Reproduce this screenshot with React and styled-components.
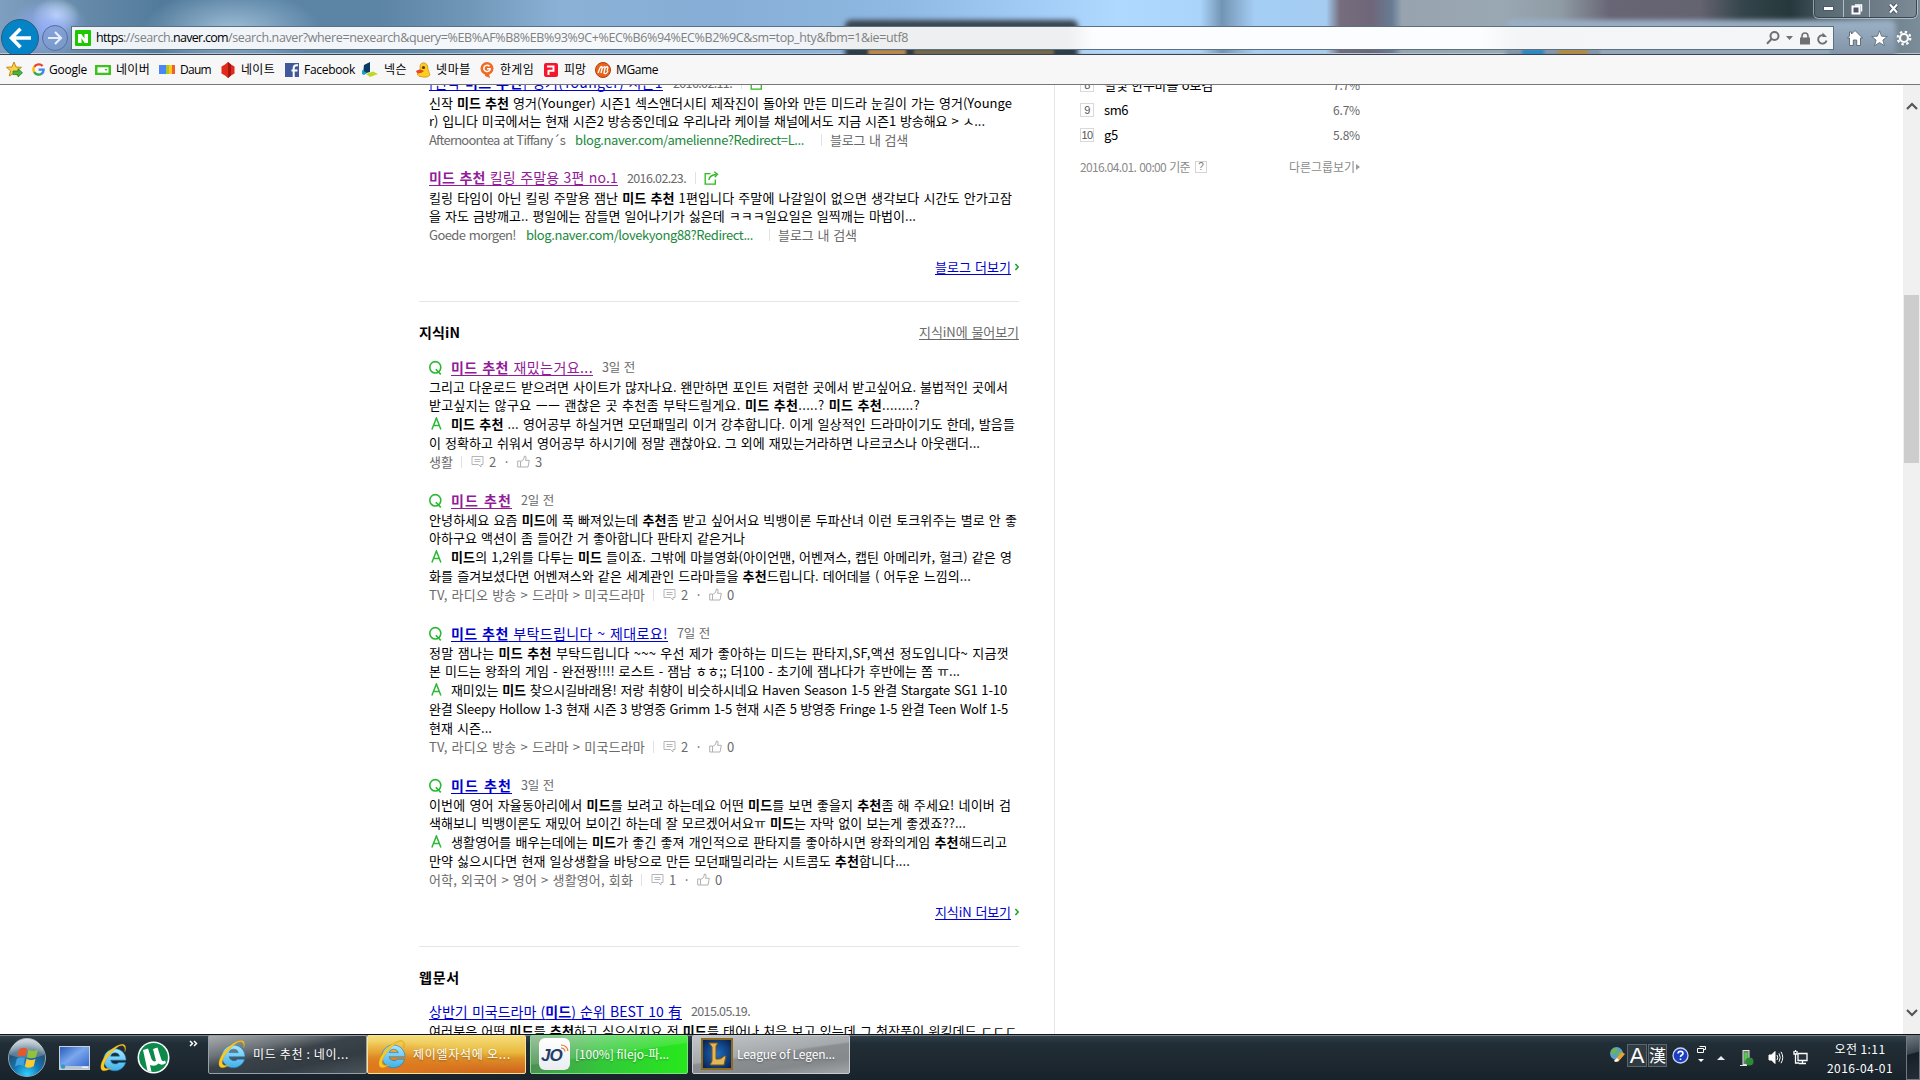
import React, { useLayoutEffect, useRef, useState } from "react";
import styled, { createGlobalStyle, css } from "styled-components";

const Global = createGlobalStyle`
  * { box-sizing: border-box; }
  body { margin: 0; background: #fff; overflow: hidden; }
  svg { display: block; flex: none; }
`;

const SANS = `"Noto Sans CJK KR", "Noto Sans", sans-serif`;

/* ---------- text fitted to a fixed measure ---------- */

const FitBox = styled.span`
  display: inline-block;
  flex: none;
  width: ${(p) => p.$w}px;
  margin-left: ${(p) => p.$ml || 0}px;
  white-space: pre;
  overflow: visible;
`;

const FitText = styled.span`
  a & {
    text-decoration: underline;
    text-decoration-thickness: 1px;
    text-underline-offset: 2px;
    text-decoration-skip-ink: none;
  }
`;

function Fit({ w, ml, children }) {
  const ref = useRef(null);
  const [spacing, setSpacing] = useState(0);
  useLayoutEffect(() => {
    const el = ref.current;
    const natural = el.getBoundingClientRect().width;
    setSpacing((w - natural) / Math.max(1, el.textContent.length));
  }, [w]);
  return (
    <FitBox $w={w} $ml={ml}>
      <FitText ref={ref} style={{ letterSpacing: `${spacing}px` }}>{children}</FitText>
    </FitBox>
  );
}

function rich(text) {
  return text.split("**").map((part, i) => (i % 2 ? <b key={i}>{part}</b> : part));
}

/* ---------- browser frame ---------- */

const Screen = styled.div`
  width: 1920px;
  height: 1080px;
  display: flex;
  flex-direction: column;
  overflow: hidden;
  font-family: ${SANS};
`;

const Glass = styled.header`
  position: relative;
  height: 55px;
  flex: none;
  overflow: hidden;
  border-bottom: 1px solid #39434f;
  box-shadow: inset 0 -1px 0 #b8c6d4;
  background:
    radial-gradient(ellipse 40px 30px at 48px 28px, rgba(150, 175, 255, 0.9), transparent),
    radial-gradient(ellipse 24px 18px at 56px 16px, rgba(225, 245, 255, 0.9), transparent),
    radial-gradient(ellipse 90px 40px at 232px 30px, rgba(175, 205, 228, 0.8), transparent),
    linear-gradient(90deg, #7f9fc0 0, #6c8fae 60px, #527b9b 160px, #5a83a5 270px, #5c84a4 380px,
      #7197b8 470px, #8bb1d6 560px, #86aed6 720px, #8fb8e2 900px, #a3cdf6 1040px, #b0d9ff 1120px,
      #abd4fb 1200px, #7395b4 1222px, #a5cef5 1255px, #a5cdf2 1326px, #756d7d 1340px, #70667a 1372px,
      #687c94 1392px, #97a4b0 1402px, #9aa8b4 1500px, #8f9ca5 1560px, #686575 1610px, #646370 1700px,
      #35454b 1742px, #26383c 1790px, #4a5c64 1830px, #6d7f8a 1880px, #7b8d98 1920px);
`;

const Ghost = styled.div`
  position: absolute;
  left: ${(p) => p.$x}px;
  top: 20px;
  width: ${(p) => p.$w}px;
  height: 46px;
  border-radius: 6px;
  background: ${(p) => p.$bg};
  filter: blur(2.5px);
`;

const Smudge = styled.div`
  position: absolute;
  left: ${(p) => p.$x}px;
  top: 49px;
  width: ${(p) => p.$w}px;
  height: 7px;
  background: ${(p) => p.$c};
  filter: blur(1.6px);
`;

const NavRow = styled.div`
  position: relative;
  height: 54px;
  display: flex;
  align-items: flex-start;
`;

const BackForward = styled.div`
  display: flex;
  width: 71px;
  height: 54px;
  padding-left: 1px;
  overflow: hidden;
  align-items: flex-start;
`;

const BackButton = styled.div`
  width: 38px;
  height: 38px;
  margin-top: 19px;
  border-radius: 50%;
  background: #0483c6;
  border: 1px solid #2a5d80;
  flex: none;
  display: flex;
  align-items: center;
  justify-content: center;
`;

const ForwardButton = styled.div`
  width: 26px;
  height: 26px;
  margin: 25px 0 0 3px;
  border-radius: 50%;
  background: rgba(125, 155, 205, 0.65);
  border: 1px solid #55709a;
  flex: none;
  display: flex;
  align-items: center;
  justify-content: center;
`;

const AddressBar = styled.div`
  display: flex;
  align-items: center;
  width: 1763px;
  height: 24px;
  margin-top: 26px;
  padding: 0 5px 0 3px;
  border: 1px solid #5c7080;
  background: linear-gradient(90deg, #eef3f8, #f6f9fc 30%, #f0f4f8 42%, #eeeff0 44%, #eeeff0 56.5%, #fbfdff 58%, #fbfdff 80%, #f4f5f7 82%, #f5f6f8);
  font: 12.5px/22px "Open Sans", ${SANS};
  color: #808080;
`;

const Dark = styled.span`
  color: #000;
`;

const NaverMark = styled.span`
  width: 16px;
  height: 16px;
  margin-right: 5px;
  border-radius: 1px;
  background: #1ec800;
  display: flex;
  align-items: center;
  justify-content: center;
  flex: none;
`;

const BarIcons = styled.div`
  display: flex;
  align-items: center;
  margin-left: auto;
  gap: ${(p) => p.$gap}px;
`;

const ToolIcons = styled.div`
  display: flex;
  align-items: center;
  gap: 8px;
  margin: 29px 0 0 13px;
`;

const WindowButtons = styled.div`
  position: absolute;
  right: 3px;
  top: 0;
  display: flex;
  width: 103px;
  height: 18px;
  border: 1px solid #3a4650;
  border-top: 0;
  border-radius: 0 0 5px 5px;
  box-shadow: 0 0 0 1px rgba(220, 230, 238, 0.55);
  background: linear-gradient(90deg, #56666e, #7b8a95);
`;

const WindowButton = styled.span`
  width: ${(p) => p.$w}px;
  display: flex;
  align-items: center;
  justify-content: center;
  border-left: ${(p) => (p.$line ? "1px solid #b3bdc5" : "0")};
`;

const Favorites = styled.nav`
  display: flex;
  align-items: center;
  flex: none;
  height: 30px;
  padding-left: 6px;
  background: #f7f7f7;
  border-bottom: 1px solid #777;
  font: 12px/28px "Open Sans", ${SANS};
  color: #000;
`;

const Favorite = styled.span`
  display: flex;
  align-items: center;
  gap: ${(p) => p.$gap}px;
  margin-left: ${(p) => p.$ml}px;
`;

const FavIcon = styled.span`
  width: ${(p) => p.$w}px;
  display: flex;
  justify-content: center;
`;

/* ---------- page ---------- */

const Page = styled.div`
  display: flex;
  flex: none;
  height: 949px;
  overflow: hidden;
  background: #fff;
  color: #000;
  font-size: 13px;
  word-spacing: 1px;
`;

const Results = styled.main`
  width: 600px;
  margin: -14px 0 0 419px;
  flex: none;
`;

const Result = styled.article`
  padding-left: 10px;
  margin-bottom: ${(p) => p.$mb}px;
`;

const row = css`
  display: flex;
  align-items: center;
  white-space: pre;
`;

const TitleRow = styled.div`
  ${row}
  height: ${(p) => p.$h || 22}px;
  line-height: ${(p) => p.$h || 22}px;
`;

const Title = styled.a`
  font-size: 14px;
  color: ${(p) => (p.$visited ? "#921b99" : "#0000cc")};
`;

const Muted = styled.span`
  font-size: 12.5px;
  color: #6a6a6a;
`;

const Url = styled.span`
  color: #20893c;
`;

const Line = styled.div`
  ${row}
  height: ${(p) => p.$h || 18}px;
  line-height: ${(p) => p.$h || 18}px;
`;

const Meta = styled(Line)`
  height: 19px;
  line-height: 19px;
  color: #6a6a6a;
`;

const Sep = styled.i`
  width: 1px;
  height: 12px;
  background: #e2e2e2;
  margin: 0 ${(p) => p.$r}px 0 ${(p) => p.$l}px;
  flex: none;
`;

const Badge = styled.span`
  width: ${(p) => p.$w}px;
  display: flex;
  flex: none;
`;

const MoreRow = styled.div`
  ${row}
  justify-content: flex-end;
  height: 20px;
  line-height: 20px;
  gap: 4px;
  margin-top: ${(p) => p.$mt}px;
`;

const MoreLink = styled.a`
  color: #0000cc;
`;

const Rule = styled.hr`
  height: 1px;
  border: 0;
  margin: 24px 0 20px;
  background: #e5e5e5;
`;

const Heading = styled.div`
  ${row}
  justify-content: space-between;
  height: 20px;
  line-height: 20px;
  margin-bottom: ${(p) => p.$mb}px;
  font-size: 14px;
`;

const AskLink = styled.a`
  font-size: 13px;
  color: #6a6a6a;
`;

const Side = styled.aside`
  width: 306px;
  margin-left: 35px;
  padding-left: 25px;
  border-left: 1px solid #e5e5e5;
  flex: none;
`;

const Ranks = styled.div`
  display: flex;
  flex-direction: column;
  margin-top: -13px;
`;

const Rank = styled.div`
  ${row}
  height: 25px;
  line-height: 25px;
`;

const RankNo = styled.span`
  width: 14px;
  height: 14px;
  margin-right: 10px;
  border: 1px solid #d9d9d9;
  color: #555;
  font: 11px/12px "Liberation Sans", sans-serif;
  letter-spacing: -0.7px;
  text-align: center;
`;

const Percent = styled.span`
  margin-left: auto;
  font-size: 12px;
  color: #666;
`;

const SideFoot = styled.div`
  ${row}
  height: 20px;
  margin-top: 10px;
  line-height: 20px;
  font-size: 12px;
  color: #8b8b8b;
`;

const Help = styled.span`
  width: 12px;
  height: 12px;
  margin: 0 auto 0 5px;
  border: 1px solid #d5d5d5;
  font: 10px/10px "Liberation Sans", sans-serif;
  text-align: center;
  color: #777;
`;

const Scrollbar = styled.div`
  display: flex;
  flex-direction: column;
  align-items: center;
  width: 17px;
  margin-left: auto;
  padding: 17px 0 17px;
  background: #f0f0f0;
`;

const Thumb = styled.div`
  width: 15px;
  height: 168px;
  margin: 184px 0 auto;
  background: #cdcdcd;
`;

/* ---------- taskbar ---------- */

const Taskbar = styled.footer`
  display: flex;
  flex: none;
  height: 46px;
  border-top: 1px solid #0d1318;
  box-shadow: inset 0 1px 0 #78858f;
  background: linear-gradient(180deg, #34424d, #222e37 18%, #1d2830 60%, #18222b);
  color: #fff;
  font: 12px/16px ${SANS};
`;

const Launchers = styled.div`
  display: flex;
  align-items: center;
  width: 208px;
  padding-left: 7px;
`;

const Slot = styled.span`
  margin: ${(p) => p.$m};
  display: flex;
`;

const Chevrons = styled.span`
  margin: 3px 0 0 19px;
  align-self: flex-start;
  display: flex;
`;

const Task = styled.div`
  display: flex;
  align-items: center;
  width: ${(p) => p.$w}px;
  height: 39px;
  margin: 0 ${(p) => p.$mr || 0}px 0 0;
  padding: 0 0 2px ${(p) => p.$pl}px;
  gap: ${(p) => p.$gap}px;
  border: 1px solid ${(p) => p.$edge};
  border-radius: 2px;
  background: ${(p) => p.$bg};
  text-shadow: 0 1px 2px rgba(0, 0, 0, 0.35);
  color: #fff;
`;

const JoIcon = styled.span`
  position: relative;
  width: 31px;
  height: 32px;
  border-radius: 6px;
  background: linear-gradient(#fff, #e9edf0);
  color: #24406a;
  font: italic bold 17px/36px "Liberation Sans", sans-serif;
  letter-spacing: -1px;
  padding-left: 2px;
  text-shadow: none;
`;

const JoWaves = styled.span`
  position: absolute;
  right: 1px;
  top: 6px;
`;

const LolIcon = styled.span`
  width: 32px;
  height: 32px;
  border: 2px solid #8f6a1f;
  background: radial-gradient(circle, #1d6fc4, #071f4e);
  display: flex;
  align-items: center;
  justify-content: center;
`;

const Tray = styled.div`
  display: flex;
  align-items: flex-start;
  margin-left: auto;
`;

const Ime = styled.span`
  width: ${(p) => p.$w}px;
  height: 23px;
  margin: 9px 1px 0 0;
  border: 1px solid #5b656c;
  background: #313b42;
  font: ${(p) => p.$font};
  text-align: center;
  overflow: hidden;
`;

const Clock = styled.div`
  width: 68px;
  margin: 4px 12px 0 0;
  text-align: center;
  line-height: 19px;
  font-size: 12px;
`;

const ShowDesktop = styled.div`
  width: 14px;
  height: 45px;
  border: 1px solid #6d7880;
  background: linear-gradient(165deg, #707a82 0, #39434b 40%, #171f26 42%, #242d35);
`;

/* ---------- drawings ---------- */

const IeLogo = ({ s = 29 }) => (
  <svg width={s} height={s + 2} viewBox="0 0 30 32">
    <defs>
      <linearGradient id="ieb" x1="0" y1="0" x2="0" y2="1">
        <stop offset="0" stopColor="#a8e8ff" />
        <stop offset="1" stopColor="#3fb0ea" />
      </linearGradient>
    </defs>
    <path d="M27.600 21.200A11.600 11.400 0 1 1 27.900 17.300V18.800H12A5 4.700 0 0 0 20.600 21.200ZM12 14.600H21.300A4.800 4.600 0 0 0 12 14.600Z" fill="url(#ieb)" fillRule="evenodd" stroke="#1779b8" strokeWidth="0.6" />
    <path d="M26.800 10C29.500 2 24.500 .2 16.500 5.200C8 10.500 1 20.500 2 27C3 31.500 8.500 29.500 13 26.800C8 28.300 4.600 27.500 5.200 23.500C6.500 17 15 7.500 21 4.200C25.500 2.400 27.300 5 26.800 10Z" fill="#fccb22" stroke="#d19a1c" strokeWidth="0.4" />
  </svg>
);

const StartOrb = () => (
  <svg width="40" height="40" viewBox="0 0 40 40">
    <defs>
      <radialGradient id="orb" cx="0.5" cy="0.95" r="0.9">
        <stop offset="0" stopColor="#2fd2ff" />
        <stop offset="0.4" stopColor="#1276b5" />
        <stop offset="0.75" stopColor="#27506f" />
        <stop offset="1" stopColor="#7d97a8" />
      </radialGradient>
      <linearGradient id="gloss" x1="0" y1="0" x2="0" y2="1">
        <stop offset="0" stopColor="#fff" stopOpacity="0.65" />
        <stop offset="1" stopColor="#fff" stopOpacity="0.15" />
      </linearGradient>
    </defs>
    <circle cx="20" cy="20" r="18.500" fill="url(#orb)" stroke="#8ba5b4" />
    <path d="M3 17A17 17 0 0 1 37 17Q20 24 3 17Z" fill="url(#gloss)" />
    <path d="M12 11.500Q16 8.500 20 11L18.400 18.500Q14 16.600 10.200 19Z" fill="#e8572a" />
    <path d="M21.500 11.500Q26 14 31 11.500L29 19Q24.500 21.500 20 19Z" fill="#94c13c" />
    <path d="M9.800 20.800Q14 18.300 18 20.500L16.300 28Q12 25.700 8 28.500Z" fill="#3fa0e0" />
    <path d="M19.600 20.800Q24 23.300 28.500 21L26.700 28.300Q22 31 17.800 28.500Z" fill="#fbc934" />
  </svg>
);

const DesktopIcon = () => (
  <svg width="31" height="24" viewBox="0 0 31 24">
    <defs>
      <linearGradient id="dsk" x1="0" y1="0" x2="1" y2="1">
        <stop offset="0" stopColor="#2458b8" />
        <stop offset="0.45" stopColor="#7ba7ee" />
        <stop offset="1" stopColor="#2b5fca" />
      </linearGradient>
    </defs>
    <rect x="0.500" y="0.500" width="30" height="23" fill="url(#dsk)" stroke="#c8d2da" />
    <rect x="1" y="20" width="29" height="3" fill="#b9c6d2" />
    <circle cx="4" cy="20.500" r="2.300" fill="#2e9ec0" />
    <rect x="23" y="20.500" width="6" height="1.500" fill="#eef" />
  </svg>
);

const Torrent = () => (
  <svg width="33" height="33" viewBox="0 0 33 33">
    <circle cx="16.500" cy="16.500" r="16" fill="#fff" />
    <circle cx="16.500" cy="16.500" r="14.400" fill="#0b8a4b" />
    <path d="M6 9L11 7.500L14.500 18Q16 21.500 19 20L16 8L20.500 6.500L24.500 19Q25.500 21 28 19.500L29 22Q25 25 21.500 22.500Q18 26 13 24L14.500 31L10.500 29.800Z" fill="#fff" />
  </svg>
);

const ShareIcon = () => (
  <svg width="15" height="14" viewBox="0 0 15 14" fill="none" stroke="#2cb71c" strokeWidth="1.300">
    <path d="M6.500 2.700H1.200V13.200H11.300V8.500" />
    <path d="M4.800 9Q5.500 4 12.500 3.500" />
    <path d="M10.300 .8L13.500 3.400L10.800 6.300" />
  </svg>
);

const QIcon = () => (
  <svg width="15" height="15" viewBox="0 0 15 15" fill="none" stroke="#2bb832" strokeWidth="1.600">
    <ellipse cx="6.300" cy="7.300" rx="5.500" ry="5.700" />
    <path d="M6.800 9.300L11.800 14.400" />
  </svg>
);

const AIcon = () => (
  <svg width="11" height="13" viewBox="0 0 11 13" fill="none" stroke="#2bb832" strokeWidth="1.500">
    <path d="M.9 12.500L5.400 1L9.900 12.500M2.600 8.600H8.200" />
  </svg>
);

const CommentIcon = () => (
  <svg width="13" height="13" viewBox="0 0 13 13" fill="none" stroke="#b5b5b5">
    <path d="M1 1.500H12V9.500H10V12L7.500 9.500H1Z" />
    <path d="M3.500 4.500H9.500M3.500 6.500H9.500" />
  </svg>
);

const ThumbIcon = () => (
  <svg width="13" height="13" viewBox="0 0 13 13" fill="none" stroke="#b0b0b0">
    <path d="M.7 6H3.500V12H.7ZM3.500 6.500L6.500 4.500L7.500 1Q9.500 .8 9 3.500L8.500 5.300H12.300L11 12H3.500" />
  </svg>
);

const Chevron = () => (
  <svg width="4" height="8" viewBox="0 0 4 8" fill="none" stroke="#1fa52c" strokeWidth="1.600">
    <path d="M.4 1L3.200 4L.4 7" />
  </svg>
);

const ScrollArrow = ({ down }) => (
  <svg width="12" height="9" viewBox="0 0 12 9" fill="none" stroke="#555" strokeWidth="2.200">
    <path d={down ? "M1 2L6 7L11 2" : "M1 7L6 2L11 7"} />
  </svg>
);

/* ---------- data ---------- */

const questions = [
  {
    visited: true, title: "**미드 추천** 재밌는거요...", w: 142, date: "3일 전", dw: 33,
    q: [["그리고 다운로드 받으려면 사이트가 많자나요. 왠만하면 포인트 저렴한 곳에서 받고싶어요. 불법적인 곳에서", 579],
      ["받고싶지는 않구요 ㅡㅡ 괜찮은 곳 추천좀 부탁드릴게요. **미드 추천**.....? **미드 추천**........?", 491]],
    a: [["**미드 추천** ... 영어공부 하실거면 모던패밀리 이거 강추합니다. 이게 일상적인 드라마이기도 한데, 발음들", 564],
      ["이 정확하고 쉬워서 영어공부 하시기에 정말 괜찮아요. 그 외에 재밌는거라하면 나르코스나 아웃랜더...", 551]],
    cat: "생활", cw: 24, replies: 2, likes: 3,
  },
  {
    visited: true, title: "**미드 추천**", w: 61, date: "2일 전", dw: 33,
    q: [["안녕하세요 요즘 **미드**에 푹 빠져있는데 **추천**좀 받고 싶어서요 빅뱅이론 두파산녀 이런 토크위주는 별로 안 좋", 588],
      ["아하구요 액션이 좀 들어간 거 좋아합니다 판타지 같은거나", 316]],
    a: [["**미드**의 1,2위를 다투는 **미드** 들이죠. 그밖에 마블영화(아이언맨, 어벤져스, 캡틴 아메리카, 헐크) 같은 영", 561],
      ["화를 즐겨보셨다면 어벤져스와 같은 세계관인 드라마들을 **추천**드립니다. 데어데블 ( 어두운 느낌의...", 542]],
    cat: "TV, 라디오 방송 > 드라마 > 미국드라마", cw: 216, replies: 2, likes: 0,
  },
  {
    title: "**미드 추천** 부탁드립니다 ~ 제대로요!", w: 217, date: "7일 전", dw: 33,
    q: [["정말 잼나는 **미드 추천** 부탁드립니다 ~~~ 우선 제가 좋아하는 미드는 판타지,SF,액션 정도입니다~ 지금껏", 580],
      ["본 미드는 왕좌의 게임 - 완전짱!!!! 로스트 - 잼남 ㅎㅎ;; 더100 - 초기에 잼나다가 후반에는 쫌 ㅠ...", 531]],
    a: [["재미있는 **미드** 찾으시길바래용! 저랑 취향이 비슷하시네요 Haven Season 1-5 완결 Stargate SG1 1-10", 556],
      ["완결 Sleepy Hollow 1-3 현재 시즌 3 방영중 Grimm 1-5 현재 시즌 5 방영중 Fringe 1-5 완결 Teen Wolf 1-5", 579],
      ["현재 시즌...", 63]],
    cat: "TV, 라디오 방송 > 드라마 > 미국드라마", cw: 216, replies: 2, likes: 0,
  },
  {
    title: "**미드 추천**", w: 61, date: "3일 전", dw: 33,
    q: [["이번에 영어 자율동아리에서 **미드**를 보려고 하는데요 어떤 **미드**를 보면 좋을지 **추천**좀 해 주세요! 네이버 검", 582],
      ["색해보니 빅뱅이론도 재밌어 보이긴 하는데 잘 모르겠어서요ㅠ **미드**는 자막 없이 보는게 좋겠죠??...", 537]],
    a: [["생활영어를 배우는데에는 **미드**가 좋긴 좋져 개인적으로 판타지를 좋아하시면 왕좌의게임 **추천**해드리고", 556],
      ["만약 싫으시다면 현재 일상생활을 바탕으로 만든 모던패밀리라는 시트콤도 **추천**합니다....", 481]],
    cat: "어학, 외국어 > 영어 > 생활영어, 회화", cw: 204, replies: 1, likes: 0,
  },
];

const Question = ({ item }) => (
  <Result $mb={18}>
    <TitleRow>
      <Badge $w={22}><QIcon /></Badge>
      <Title $visited={item.visited}><Fit w={item.w}>{rich(item.title)}</Fit></Title>
      <Muted><Fit ml={9} w={item.dw}>{item.date}</Fit></Muted>
    </TitleRow>
    {item.q.map(([text, w]) => <Line key={text}><Fit w={w}>{rich(text)}</Fit></Line>)}
    {item.a.map(([text, w], i) => (
      <Line $h={19} key={text}>
        {i === 0 && <Badge $w={22}><Slot $m="0 0 0 2px"><AIcon /></Slot></Badge>}
        <Fit w={w}>{rich(text)}</Fit>
      </Line>
    ))}
    <Meta>
      <Fit w={item.cw}>{item.cat}</Fit>
      <Sep $l={8} $r={9} />
      <CommentIcon />
      <Fit ml={5} w={7}>{String(item.replies)}</Fit>
      <Fit ml={7} w={4}>·</Fit>
      <Slot $m="0 5px 0 10px"><ThumbIcon /></Slot>
      <Fit w={7}>{String(item.likes)}</Fit>
    </Meta>
  </Result>
);

const IconStar = () => (
  <svg width="17" height="17" viewBox="0 0 17 17">
    <path d="M8 1L10 6L15.500 6.300L11.400 9.800L12.800 15L8 12.200L3.200 15L4.600 9.800L.5 6.300L6 6Z" fill="#fbd24a" stroke="#c48a12" />
    <path d="M7 10H12V7.600L16.500 11.800L12 16V13.600H7Z" fill="#46b53c" stroke="#1f7d1c" strokeWidth="0.700" />
  </svg>
);
const IconGoogle = () => (
  <svg width="13" height="13" viewBox="0 0 13 13" fill="none" strokeWidth="2.400">
    <path d="M10.600 3A5.200 5.200 0 0 0 2.300 3.900" stroke="#ea4335" />
    <path d="M2.300 3.700A5.200 5.200 0 0 0 2.300 9.300" stroke="#fbbc05" />
    <path d="M2.200 9.100A5.200 5.200 0 0 0 9.800 10.600" stroke="#34a853" />
    <path d="M9.500 10.800Q11.800 9 11.600 6.600H6.600" stroke="#4285f4" />
  </svg>
);
const IconNaver = () => (
  <svg width="16" height="10" viewBox="0 0 16 10">
    <rect width="16" height="10" fill="#3cc31c" />
    <rect x="2.500" y="2.300" width="11" height="5.400" fill="#fff" />
    <path d="M9.500 4H12.500L11 6Z" fill="#3cc31c" />
  </svg>
);
const IconDaum = () => (
  <svg width="16" height="9" viewBox="0 0 16 9">
    <rect width="7" height="9" fill="#4a86f5" />
    <rect x="7" width="3" height="9" fill="#a6c926" />
    <rect x="10" width="3" height="9" fill="#ffc61c" />
    <rect x="13" width="3" height="9" fill="#f0602a" />
  </svg>
);
const IconNate = () => (
  <svg width="14" height="16" viewBox="0 0 14 16">
    <path d="M7 0L10 2.500L13.500 4.500V11.500L10 13.500L7 16L4 13.500L.5 11.500V4.500L4 2.500Z" fill="#e02a1c" />
    <path d="M7 0L10 2.500V13.500L7 16Z" fill="#a81410" />
  </svg>
);
const IconFacebook = () => (
  <svg width="14" height="14" viewBox="0 0 14 14">
    <rect width="14" height="14" fill="#41599a" />
    <path d="M13 2.200H11.500Q8.700 2.200 8.700 5V14M6.500 7.500H12.500" stroke="#fff" strokeWidth="2" fill="none" />
  </svg>
);
const IconNexon = () => (
  <svg width="16" height="15" viewBox="0 0 16 15">
    <path d="M2 3L8 0V10L1 12Z" fill="#0c3a66" />
    <path d="M0 8L5 11L2 13L0 12Z" fill="#12a5c8" />
    <path d="M4 12L11 9.500L16 12L8 15Z" fill="#c2d62c" />
  </svg>
);
const IconNetmarble = () => (
  <svg width="15" height="16" viewBox="0 0 15 16">
    <path d="M4 4Q5 0 9 1Q12 2 12 7L14 13Q12 16 7 15Q2 15 1 12L4 10Z" fill="#ffcd1e" stroke="#b97d10" strokeWidth="0.600" />
    <circle cx="7.500" cy="5.500" r="1.600" fill="#6b3410" />
    <path d="M0 9Q4 6 8 9Q5 12 1 11Z" fill="#e8462a" />
  </svg>
);
const IconHangame = () => (
  <svg width="14" height="16" viewBox="0 0 14 16">
    <circle cx="7" cy="6.500" r="6.500" fill="#ef6a24" />
    <path d="M5 12L9 12L10 16L5 14Z" fill="#ef6a24" />
    <path d="M9.500 4.300A3.200 3.200 0 1 0 10.200 6.800H7" stroke="#fff" strokeWidth="1.500" fill="none" />
  </svg>
);
const IconPmang = () => (
  <svg width="14" height="14" viewBox="0 0 14 14">
    <rect width="14" height="14" rx="2" fill="#f5152d" />
    <path d="M4.500 12V7M3 3.500H9.500V7.800H4.500" stroke="#fff" strokeWidth="2" fill="none" />
  </svg>
);
const IconMgame = () => (
  <svg width="16" height="16" viewBox="0 0 16 16">
    <circle cx="8" cy="8" r="7.500" fill="#e8641b" stroke="#b03c0c" />
    <path d="M3 11L5 6Q7 3 7.200 6L6 11M7 7Q10 3 10 6L9 11Q11 13 13 9M9.800 6.500Q12.500 3 12.800 6L12 9" stroke="#fff" strokeWidth="1.300" fill="none" />
  </svg>
);

const favorites = [
  { icon: IconGoogle, iw: 15, gap: 3, ml: 8, name: "Google", w: 38 },
  { icon: IconNaver, iw: 16, gap: 5, ml: 8, name: "네이버", w: 34 },
  { icon: IconDaum, iw: 16, gap: 5, ml: 9, name: "Daum", w: 31 },
  { icon: IconNate, iw: 14, gap: 6, ml: 10, name: "네이트", w: 34 },
  { icon: IconFacebook, iw: 14, gap: 5, ml: 10, name: "Facebook", w: 51 },
  { icon: IconNexon, iw: 16, gap: 6, ml: 7, name: "넥슨", w: 23 },
  { icon: IconNetmarble, iw: 15, gap: 5, ml: 9, name: "넷마블", w: 35 },
  { icon: IconHangame, iw: 14, gap: 6, ml: 9, name: "한게임", w: 34 },
  { icon: IconPmang, iw: 14, gap: 6, ml: 10, name: "피망", w: 22 },
  { icon: IconMgame, iw: 16, gap: 5, ml: 9, name: "MGame", w: 42 },
];

export default function App() {
  return (
    <Screen>
      <Global />
      <Glass>
        <Ghost $x={845} $w={233} $bg="linear-gradient(#3b4651, #2c3842)" />
        <Ghost $x={1506} $w={390} $bg="linear-gradient(#9db2c8, #78899a)" />
        <Smudge $x={868} $w={38} $c="#b98a50" />
        <Smudge $x={914} $w={140} $c="#75684c" />
        <Smudge $x={1522} $w={22} $c="#2b88c4" />
        <Smudge $x={1558} $w={30} $c="#b28a45" />
        <Smudge $x={1600} $w={230} $c="#94a8ba" />
        <NavRow>
          <BackForward>
            <BackButton>
              <svg width="24" height="22" viewBox="0 0 24 22" fill="none" stroke="#fff" strokeWidth="3.600">
                <path d="M12.500 1.800L3.500 11L12.500 20.200M4 11H23" />
              </svg>
            </BackButton>
            <ForwardButton>
              <svg width="16" height="16" viewBox="0 0 16 16" fill="none" stroke="#e6eefa" strokeWidth="2.200">
                <path d="M8 2L14 8L8 14M1 8H13.500" />
              </svg>
            </ForwardButton>
          </BackForward>
          <AddressBar>
            <NaverMark>
              <svg width="10" height="9" viewBox="0 0 10 9"><path d="M0 0H3.300L6.500 4.600V0H10V9H6.700L3.500 4.300V9H0Z" fill="#fff" /></svg>
            </NaverMark>
            <Dark><Fit w={27}>https</Fit></Dark>
            <Fit w={50}>://search.</Fit>
            <Dark><Fit w={55}>naver.com</Fit></Dark>
            <Fit w={680}>/search.naver?where=nexearch&amp;query=%EB%AF%B8%EB%93%9C+%EC%B6%94%EC%B2%9C&amp;sm=top_hty&amp;fbm=1&amp;ie=utf8</Fit>
            <BarIcons $gap={6}>
              <svg width="14" height="14" viewBox="0 0 14 14" fill="none" stroke="#707070" strokeWidth="2">
                <circle cx="8.500" cy="5" r="4" /><path d="M5.500 8L1 12.800" />
              </svg>
              <svg width="7" height="4" viewBox="0 0 7 4"><path d="M0 0H7L3.500 4Z" fill="#707070" /></svg>
              <svg width="12" height="13" viewBox="0 0 12 13">
                <rect x="1" y="5.500" width="10" height="7" fill="#707070" />
                <path d="M3 6V4Q3 1 6 1Q9 1 9 4V6" stroke="#707070" strokeWidth="1.600" fill="none" />
              </svg>
              <svg width="11" height="13" viewBox="0 0 11 13" fill="none" stroke="#707070" strokeWidth="1.900">
                <path d="M9.500 8.500A4.200 4.200 0 1 1 7.500 3.800" /><path d="M5.500 .5V5H10L7.500 2.500Z" fill="#707070" stroke="none" />
              </svg>
            </BarIcons>
          </AddressBar>
          <ToolIcons>
            <svg width="16" height="18" viewBox="0 0 16 18"><path d="M8 1.500L15.500 9H13.500V16.500H9.700V11H6.300V16.500H2.500V9H.5L2.500 7V3H4.500V5Z" fill="#fff" stroke="#56646f" strokeWidth="0.900" /></svg>
            <svg width="17" height="17" viewBox="0 0 17 17"><path d="M8.500 .8L10.600 6.200L16.300 6.500L11.900 10L13.400 15.700L8.500 12.500L3.600 15.700L5.100 10L.7 6.500L6.400 6.200Z" fill="#fff" stroke="#56646f" strokeWidth="0.800" /></svg>
            <svg width="16" height="16" viewBox="0 0 16 16" fill="none" stroke="#fff">
              <circle cx="8" cy="8" r="4" strokeWidth="2.200" />
              <circle cx="8" cy="8" r="6.300" strokeWidth="2.200" strokeDasharray="2.400 2.548" />
            </svg>
          </ToolIcons>
        </NavRow>
        <WindowButtons>
          <WindowButton $w={28}>
            <svg width="11" height="5" viewBox="0 0 11 5"><rect x=".5" y=".5" width="10" height="4" fill="#fff" stroke="#4c5570" /></svg>
          </WindowButton>
          <WindowButton $w={27} $line>
            <svg width="12" height="12" viewBox="0 0 12 12" fill="none"><path d="M4 2H10.500V8.500" stroke="#fff" strokeWidth="1.500" /><rect x="1.500" y="3.500" width="7" height="7" fill="#4c5570" stroke="#fff" strokeWidth="2" /></svg>
          </WindowButton>
          <WindowButton $w={47} $line>
            <svg width="11" height="11" viewBox="0 0 11 11"><path d="M2 1.500L9 9.500M9 1.500L2 9.500" stroke="#3f4a60" strokeWidth="4" /><path d="M2 1.500L9 9.500M9 1.500L2 9.500" stroke="#fff" strokeWidth="2.200" /></svg>
          </WindowButton>
        </WindowButtons>
      </Glass>

      <Favorites>
        <IconStar />
        {favorites.map(({ icon: Icon, iw, gap, ml, name, w }) => (
          <Favorite key={name} $gap={gap} $ml={ml}>
            <FavIcon $w={iw}><Icon /></FavIcon>
            <Fit w={w}>{name}</Fit>
          </Favorite>
        ))}
      </Favorites>

      <Page>
        <Results>
          <Result $mb={17}>
            <TitleRow $h={23}>
              <Title><Fit w={234}>{rich("[신작 **미드 추천**] 영거(Younger) 시즌1")}</Fit></Title>
              <Muted><Fit ml={10} w={59}>2016.02.11.</Fit></Muted>
              <Sep $l={9} $r={8} />
              <ShareIcon />
            </TitleRow>
            <Line><Fit w={583}>{rich("신작 **미드 추천** 영거(Younger) 시즌1 섹스앤더시티 제작진이 돌아와 만든 미드라 눈길이 가는 영거(Younge")}</Fit></Line>
            <Line><Fit w={556}>{"r) 입니다 미국에서는 현재 시즌2 방송중인데요 우리나라 케이블 채널에서도 지금 시즌1 방송해요 > ㅅ..."}</Fit></Line>
            <Meta>
              <Fit w={136}>Afternoontea at Tiffany´s</Fit>
              <Url><Fit ml={10} w={229}>blog.naver.com/amelienne?Redirect=L...</Fit></Url>
              <Sep $l={17} $r={8} />
              <Fit w={78}>블로그 내 검색</Fit>
            </Meta>
          </Result>
          <Result $mb={0}>
            <TitleRow $h={23}>
              <Title $visited><Fit w={189}>{rich("**미드 추천** 킬링 주말용 3편 no.1")}</Fit></Title>
              <Muted><Fit ml={9} w={59}>2016.02.23.</Fit></Muted>
              <Sep $l={9} $r={8} />
              <ShareIcon />
            </TitleRow>
            <Line><Fit w={583}>{rich("킬링 타임이 아닌 킬링 주말용 잼난 **미드 추천** 1편입니다 주말에 나갈일이 없으면 생각보다 시간도 안가고잠")}</Fit></Line>
            <Line><Fit w={487}>{"을 자도 금방깨고.. 평일에는 잠들면 일어나기가 싫은데 ㅋㅋㅋ일요일은 일찍깨는 마법이..."}</Fit></Line>
            <Meta>
              <Fit w={87}>Goede morgen!</Fit>
              <Url><Fit ml={10} w={227}>blog.naver.com/lovekyong88?Redirect...</Fit></Url>
              <Sep $l={16} $r={8} />
              <Fit w={79}>블로그 내 검색</Fit>
            </Meta>
          </Result>
          <MoreRow $mt={13}><MoreLink><Fit w={76}>블로그 더보기</Fit></MoreLink><Chevron /></MoreRow>
          <Rule />
          <Heading $mb={14}>
            <b><Fit w={41}>지식iN</Fit></b>
            <AskLink><Fit w={100}>지식iN에 물어보기</Fit></AskLink>
          </Heading>
          {questions.map((item, i) => <Question key={i} item={item} />)}
          <MoreRow $mt={-5}><MoreLink><Fit w={76}>지식iN 더보기</Fit></MoreLink><Chevron /></MoreRow>
          <Rule />
          <Heading $mb={13}><b><Fit w={41}>웹문서</Fit></b></Heading>
          <Result $mb={0}>
            <TitleRow>
              <Title><Fit w={253}>{rich("상반기 미국드라마 (**미드**) 순위 BEST 10 有")}</Fit></Title>
              <Muted><Fit ml={9} w={59}>2015.05.19.</Fit></Muted>
            </TitleRow>
            <Line><Fit w={588}>{rich("여러분은 어떤 **미드**를 **추천**하고 싶으신지요 전 **미드**를 태어나 처음 보고 있는데 그 첫작품이 워킹데드 ㄷㄷㄷ")}</Fit></Line>
          </Result>
        </Results>

        <Side>
          <Ranks>
            <Rank><RankNo>8</RankNo><Fit w={109}>별빛 한우마을 o보검</Fit><Percent><Fit w={27}>7.7%</Fit></Percent></Rank>
            <Rank><RankNo>9</RankNo><Fit w={24}>sm6</Fit><Percent><Fit w={27}>6.7%</Fit></Percent></Rank>
            <Rank><RankNo>10</RankNo><Fit w={14}>g5</Fit><Percent><Fit w={27}>5.8%</Fit></Percent></Rank>
          </Ranks>
          <SideFoot>
            <Fit w={110}>2016.04.01. 00:00 기준</Fit>
            <Help>?</Help>
            <Fit w={66}>다른그룹보기</Fit>
            <Slot $m="0 0 0 1px"><svg width="4" height="6" viewBox="0 0 4 6"><path d="M0 0L4 3L0 6Z" fill="#999" /></svg></Slot>
          </SideFoot>
        </Side>

        <Scrollbar>
          <ScrollArrow />
          <Thumb />
          <ScrollArrow down />
        </Scrollbar>
      </Page>

      <Taskbar>
        <Launchers>
          <StartOrb />
          <Slot $m="0 0 0 12px"><DesktopIcon /></Slot>
          <Slot $m="0 0 0 9px"><IeLogo /></Slot>
          <Slot $m="0 0 0 9px"><Torrent /></Slot>
          <Chevrons>
            <svg width="10" height="10" viewBox="0 0 10 10" fill="none" stroke="#fff" strokeWidth="1.500"><path d="M1 3L3.500 5.500L1 8M5 3L7.500 5.500L5 8" /></svg>
          </Chevrons>
        </Launchers>
        <Task $w={159} $pl={8} $gap={6} $edge="#98a0a5" $bg="linear-gradient(168deg, #a9adb0 0, #6c7378 30%, #3b434a 46%, #343c43 70%, #4a535a 100%)">
          <IeLogo s={30} /><Fit w={96}>미드 추천 : 네이...</Fit>
        </Task>
        <Task $w={159} $pl={9} $gap={6} $mr={4} $edge="#f7e49a" $bg="radial-gradient(ellipse at 10% 100%, #e07a1f, transparent 60%), linear-gradient(180deg, #f4dd7a 0, #e9b93c 45%, #dd9228 60%, #cf601c 100%)">
          <IeLogo s={30} /><Fit w={98}>제이엘자석에 오...</Fit>
        </Task>
        <Task $w={158} $pl={8} $gap={5} $mr={4} $edge="#7fe383" $bg="linear-gradient(172deg, rgba(255,255,255,.45) 0, rgba(255,255,255,.12) 48%, transparent 50%), linear-gradient(90deg, #4d8f54, #33c83a 45%, #27e81c)">
          <JoIcon>JO<JoWaves><svg width="8" height="8" viewBox="0 0 8 8" fill="none" stroke="#ef6a2c" strokeWidth="1.200"><path d="M0 1Q6 1 7 7M0 4Q3.500 4 4 7.500" /></svg></JoWaves></JoIcon>
          <Fit w={94}>[100%] filejo-파...</Fit>
        </Task>
        <Task $w={158} $pl={8} $gap={4} $edge="#c9ccce" $bg="linear-gradient(172deg, #c4c7c9 0, #a6a9ac 46%, #8b8e91 50%, #85898c 75%, #a2a5a8 100%)">
          <LolIcon>
            <svg width="26" height="26" viewBox="0 0 26 26"><path d="M5 2H14L12 5V18Q17 19 20 15H22L20 24H6L8 20V6Z" fill="#e2b75a" stroke="#7a5513" /></svg>
          </LolIcon>
          <Fit w={98}>League of Legen...</Fit>
        </Task>
        <Tray>
          <Slot $m="11px 1px 0 0">
            <svg width="17" height="17" viewBox="0 0 17 17">
              <circle cx="7.500" cy="7.500" r="6.500" fill="#5b9fc8" />
              <path d="M2 5Q6 0 9 3Q7 7 3 9ZM8 7L12 5L13 9L9 13Z" fill="#6fb648" />
              <path d="M5 15L13 6L16 8L9 16Z" fill="#e8a03a" />
              <path d="M5 15L8 12L10 14L7 16Z" fill="#fff" />
            </svg>
          </Slot>
          <Ime $w={20} $font='22px/22px "Liberation Sans", sans-serif'>A</Ime>
          <Ime $w={19} $font='17px/19px "Noto Sans CJK KR", sans-serif'>漢</Ime>
          <Slot $m="12px 8px 0 4px">
            <svg width="17" height="17" viewBox="0 0 17 17">
              <circle cx="8.500" cy="8.500" r="7.500" fill="#1b3fc0" stroke="#c8d4f4" strokeWidth="1.300" />
              <path d="M6 6.500Q6.200 4.200 8.500 4.200Q11 4.300 11 6.400Q11 7.500 9.500 8.300Q8.500 8.900 8.500 10M8.500 11.500V13" stroke="#fff" strokeWidth="1.600" fill="none" />
            </svg>
          </Slot>
          <Slot $m="10px 11px 0 0">
            <svg width="9" height="18" viewBox="0 0 9 18" fill="none" stroke="#fff">
              <path d="M2.500 1.500H8.500V4.500H6.500M.5 3.500H6.500V7.500H.5Z" /><path d="M1 14H7L4 17Z" fill="#fff" stroke="none" />
            </svg>
          </Slot>
          <Slot $m="21px 15px 0 0"><svg width="8" height="4" viewBox="0 0 8 4"><path d="M0 4L4 0L8 4Z" fill="#e8ecef" /></svg></Slot>
          <Slot $m="14px 14px 0 0">
            <svg width="14" height="18" viewBox="0 0 14 18">
              <rect x="3" y="1.500" width="6" height="14" fill="#6f7a72" stroke="#dfe5df" />
              <rect x="4.500" y="3.500" width="3" height="8" fill="#54cf4a" /><circle cx="9.500" cy="12.500" r="4" fill="#2f8a38" /><path d="M0 16.500H7" stroke="#dfe5df" />
            </svg>
          </Slot>
          <Slot $m="15px 9px 0 0">
            <svg width="16" height="15" viewBox="0 0 16 15" fill="none" stroke="#fff">
              <path d="M1 5H3.500L7 1.500V13.500L3.500 10H1Z" fill="#fff" /><path d="M9 5Q10.500 7.500 9 10M11 3.300Q13.500 7.500 11 11.700M13 1.800Q16.500 7.500 13 13.200" />
            </svg>
          </Slot>
          <Slot $m="15px 18px 0 0">
            <svg width="15" height="15" viewBox="0 0 15 15" fill="none" stroke="#fff" strokeWidth="1.300">
              <path d="M5 3.500H14V10.500H5Z" fill="#26313a" /><path d="M9.500 10.500V13M6 13.500H13M2.500 4V13H6M1 1V4H4V1M2.500 0V2" />
            </svg>
          </Slot>
          <Clock>
            <Fit w={51}>오전 1:11</Fit>
            <br />
            <Fit w={66}>2016-04-01</Fit>
          </Clock>
          <ShowDesktop />
        </Tray>
      </Taskbar>
    </Screen>
  );
}
